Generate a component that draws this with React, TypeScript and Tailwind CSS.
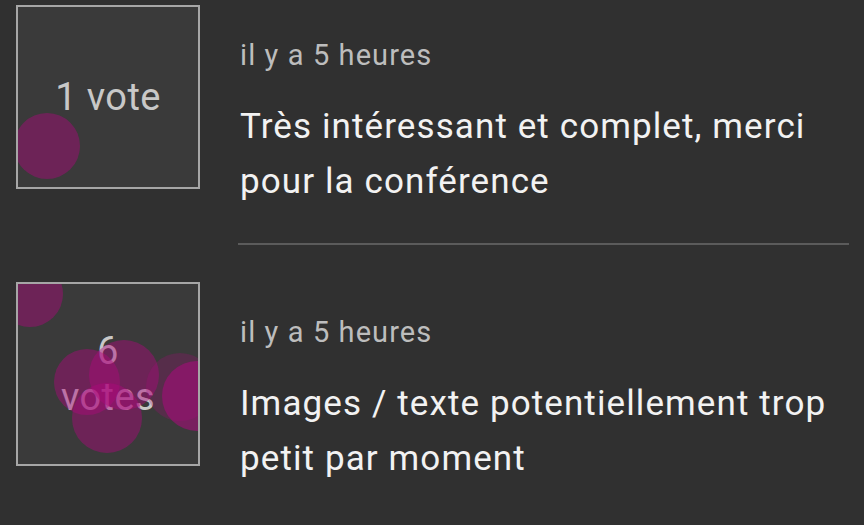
import React from "react";

type Dot = { l: number; t: number; s: number; o: number };

function VoteBox({ label, dots }: { label: React.ReactNode; dots: Dot[] }) {
  return (
    <div className="relative w-[184px] h-[184px] shrink-0 border-2 border-[#a6a6a6] bg-[#3a3a3a] overflow-hidden flex items-center justify-center">
      <div className="w-[114px] text-center text-[38px] leading-[46px] tracking-[0.4px] text-[#c8c8c8]">{label}</div>
      {dots.map((d, i) => (
        <div
          key={i}
          className="absolute rounded-full bg-[rgb(173,9,125)]"
          style={{ left: d.l, top: d.t, width: d.s, height: d.s, opacity: d.o }}
        />
      ))}
    </div>
  );
}

function Item({ label, dots, text, divider }: { label: React.ReactNode; dots: Dot[]; text: string; divider: boolean }) {
  return (
    <div className="flex gap-[38px] h-[277px]">
      <VoteBox label={label} dots={dots} />
      <div className="flex-1 pt-[34px]">
        <div className="ml-[2px] text-[29px] leading-[32px] tracking-[1.1px] text-[#bdbdbd]">il y a 5 heures</div>
        <div className="ml-[2px] mt-[28px] text-[35px] leading-[55px] tracking-[1.1px] text-[#f2f2f2]">{text}</div>
        {divider && <div className="mt-[34px] h-[2px] bg-[#5b5b5b]" />}
      </div>
    </div>
  );
}

export default function App() {
  return (
    <div
      className="w-[864px] h-[525px] overflow-hidden bg-[#303030] pt-[5px] pl-4 pr-[15px]"
      style={{ fontFamily: "Roboto, 'Noto Sans', sans-serif" }}
    >
      <Item
        label="1 vote"
        dots={[{ l: -4, t: 106, s: 66, o: 0.45 }]}
        text="Très intéressant et complet, merci pour la conférence"
        divider
      />
      <Item
        label="6 votes"
        dots={[
          { l: -21, t: -23, s: 66, o: 0.45 },
          { l: 36, t: 65, s: 66, o: 0.45 },
          { l: 71, t: 56, s: 70, o: 0.45 },
          { l: 54, t: 99, s: 70, o: 0.45 },
          { l: 128, t: 69, s: 68, o: 0.25 },
          { l: 144, t: 77, s: 70, o: 0.55 },
        ]}
        text="Images / texte potentiellement trop petit par moment"
        divider={false}
      />
    </div>
  );
}
